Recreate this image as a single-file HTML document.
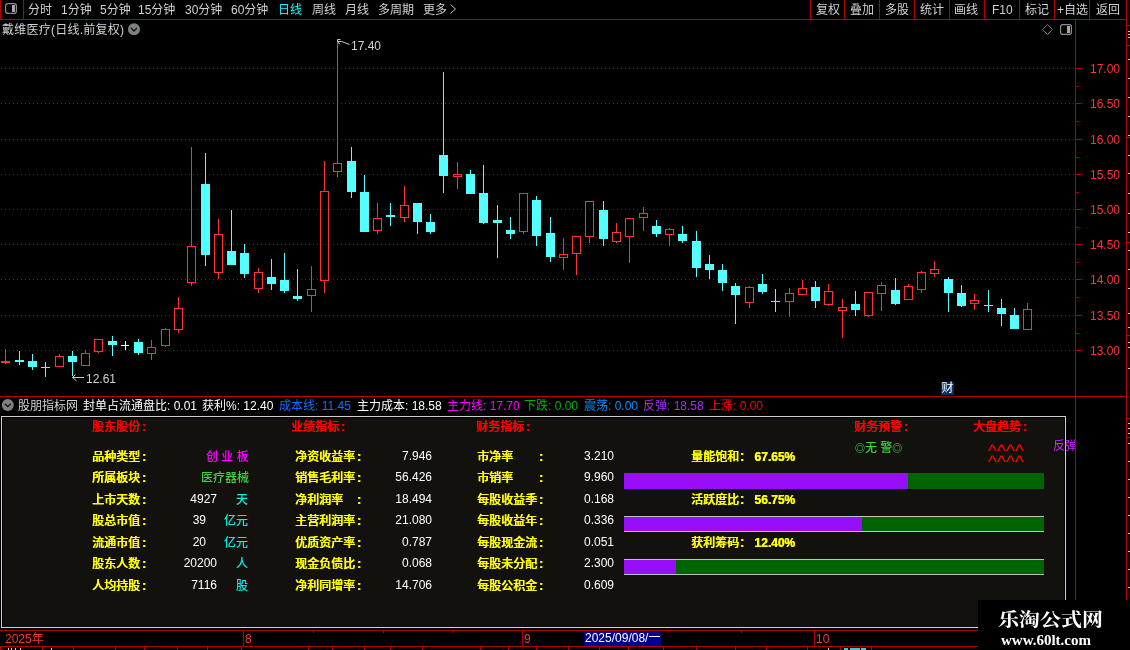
<!DOCTYPE html>
<html lang="zh-CN"><head><meta charset="utf-8"><title>戴维医疗 日线</title>
<style>
html,body{margin:0;padding:0;background:#000;}
body{width:1130px;height:650px;position:relative;overflow:hidden;font-family:"Liberation Sans","Noto Sans CJK SC",sans-serif;font-size:12px;color:#d2d2d2;}
#g{position:absolute;left:0;top:0;}
#tx{position:absolute;left:0;top:0;width:1130px;height:650px;will-change:transform;}
.t{position:absolute;white-space:nowrap;line-height:14px;height:14px;}
.b{font-weight:500;text-shadow:0.5px 0 0 currentColor;}
.y{color:#ffff00;}.r{color:#ff0000;}.w{color:#ffffff;}.c{color:#00f0f0;}.m,.m2{color:#ff00ff;}.gn{color:#40d040;}
.ax{color:#ff3232;}.cy{color:#00ffff;}.bl{color:#0a70ff;}.bl2{color:#0090ff;}.g2{color:#00b400;}.pu{color:#a82cf4;}
#tx .m,#tx .gn,#tx .c{font-weight:500;}
i{font-style:normal;margin-left:2px;font-weight:700;}
.n{color:#ffffff;text-align:right;}
</style></head><body>

<svg id="g" width="1130" height="650" viewBox="0 0 1130 650" shape-rendering="crispEdges">
<rect x="0" y="19" width="1127" height="1" fill="#b40000"/>
<rect x="0" y="0" width="1" height="20" fill="#b40000"/>
<rect x="23" y="0" width="1" height="20" fill="#b40000"/>
<rect x="810" y="0" width="1" height="19" fill="#b40000"/>
<rect x="844" y="0" width="1" height="19" fill="#b40000"/>
<rect x="879" y="0" width="1" height="19" fill="#b40000"/>
<rect x="914" y="0" width="1" height="19" fill="#b40000"/>
<rect x="949" y="0" width="1" height="19" fill="#b40000"/>
<rect x="984" y="0" width="1" height="19" fill="#b40000"/>
<rect x="1019" y="0" width="1" height="19" fill="#b40000"/>
<rect x="1054" y="0" width="1" height="19" fill="#b40000"/>
<rect x="1089" y="0" width="1" height="19" fill="#b40000"/>
<rect x="1126" y="0" width="1" height="600" fill="#b40000"/>
<rect x="1075" y="19" width="1" height="628" fill="#b40000"/>
<rect x="0" y="396" width="1127" height="1" fill="#b40000"/>
<rect x="0" y="630" width="978" height="1" fill="#b40000"/>
<rect x="0" y="646" width="978" height="1" fill="#b40000"/>
<line x1="1" y1="68.5" x2="1075" y2="68.5" stroke="#b40000" stroke-width="1" stroke-dasharray="1 3"/>
<rect x="1076" y="68" width="5" height="1" fill="#b40000"/>
<line x1="1" y1="103.5" x2="1075" y2="103.5" stroke="#b40000" stroke-width="1" stroke-dasharray="1 3"/>
<rect x="1076" y="103" width="5" height="1" fill="#b40000"/>
<line x1="1" y1="139.5" x2="1075" y2="139.5" stroke="#b40000" stroke-width="1" stroke-dasharray="1 3"/>
<rect x="1076" y="139" width="5" height="1" fill="#b40000"/>
<line x1="1" y1="174.5" x2="1075" y2="174.5" stroke="#b40000" stroke-width="1" stroke-dasharray="1 3"/>
<rect x="1076" y="174" width="5" height="1" fill="#b40000"/>
<line x1="1" y1="209.5" x2="1075" y2="209.5" stroke="#b40000" stroke-width="1" stroke-dasharray="1 3"/>
<rect x="1076" y="209" width="5" height="1" fill="#b40000"/>
<line x1="1" y1="244.5" x2="1075" y2="244.5" stroke="#b40000" stroke-width="1" stroke-dasharray="1 3"/>
<rect x="1076" y="244" width="5" height="1" fill="#b40000"/>
<line x1="1" y1="279.5" x2="1075" y2="279.5" stroke="#b40000" stroke-width="1" stroke-dasharray="1 3"/>
<rect x="1076" y="279" width="5" height="1" fill="#b40000"/>
<line x1="1" y1="315.5" x2="1075" y2="315.5" stroke="#b40000" stroke-width="1" stroke-dasharray="1 3"/>
<rect x="1076" y="315" width="5" height="1" fill="#b40000"/>
<line x1="1" y1="350.5" x2="1075" y2="350.5" stroke="#b40000" stroke-width="1" stroke-dasharray="1 3"/>
<rect x="1076" y="350" width="5" height="1" fill="#b40000"/>
<rect x="1076" y="86" width="3" height="1" fill="#b40000"/>
<rect x="1076" y="121" width="3" height="1" fill="#b40000"/>
<rect x="1076" y="157" width="3" height="1" fill="#b40000"/>
<rect x="1076" y="192" width="3" height="1" fill="#b40000"/>
<rect x="1076" y="227" width="3" height="1" fill="#b40000"/>
<rect x="1076" y="262" width="3" height="1" fill="#b40000"/>
<rect x="1076" y="297" width="3" height="1" fill="#b40000"/>
<rect x="1076" y="333" width="3" height="1" fill="#b40000"/>
<rect x="1" y="416" width="1065" height="212" fill="#d0d0d0"/>
<rect x="2" y="417" width="1063" height="210" fill="#000"/>
<rect x="3" y="418" width="1061" height="209" fill="#12110e"/>
<rect x="624" y="473" width="284" height="16" fill="#970ef9"/>
<rect x="908" y="473" width="136" height="16" fill="#006400"/>
<rect x="624" y="516" width="238" height="16" fill="#970ef9"/>
<rect x="862" y="516" width="182" height="16" fill="#006400"/>
<rect x="624" y="516" width="420" height="1" fill="#c0c0c0"/>
<rect x="624" y="531" width="420" height="1" fill="#c0c0c0"/>
<rect x="624" y="559" width="52" height="16" fill="#970ef9"/>
<rect x="676" y="559" width="368" height="16" fill="#006400"/>
<rect x="624" y="559" width="420" height="1" fill="#c0c0c0"/>
<rect x="624" y="574" width="420" height="1" fill="#c0c0c0"/>
<rect x="243" y="630" width="1" height="17" fill="#b40000"/>
<rect x="522" y="630" width="1" height="17" fill="#b40000"/>
<rect x="814" y="630" width="1" height="17" fill="#b40000"/>
<rect x="313" y="630" width="1" height="3" fill="#b40000"/>
<rect x="383" y="630" width="1" height="3" fill="#b40000"/>
<rect x="452" y="630" width="1" height="3" fill="#b40000"/>
<rect x="668" y="630" width="1" height="3" fill="#b40000"/>
<rect x="741" y="630" width="1" height="3" fill="#b40000"/>
<rect x="0" y="647" width="1" height="3" fill="#b40000"/>
<rect x="42" y="647" width="1" height="3" fill="#b40000"/>
<rect x="73" y="647" width="1" height="3" fill="#b40000"/>
<rect x="115" y="647" width="1" height="3" fill="#b40000"/>
<rect x="144" y="647" width="1" height="3" fill="#b40000"/>
<rect x="177" y="647" width="1" height="3" fill="#b40000"/>
<rect x="207" y="647" width="1" height="3" fill="#b40000"/>
<rect x="241" y="647" width="1" height="3" fill="#b40000"/>
<rect x="308" y="647" width="1" height="3" fill="#b40000"/>
<rect x="332" y="647" width="1" height="3" fill="#b40000"/>
<rect x="364" y="647" width="1" height="3" fill="#b40000"/>
<rect x="390" y="647" width="1" height="3" fill="#b40000"/>
<rect x="422" y="647" width="1" height="3" fill="#b40000"/>
<rect x="480" y="647" width="1" height="3" fill="#b40000"/>
<rect x="508" y="647" width="1" height="3" fill="#b40000"/>
<rect x="536" y="647" width="1" height="3" fill="#b40000"/>
<rect x="568" y="647" width="1" height="3" fill="#b40000"/>
<rect x="599" y="647" width="1" height="3" fill="#b40000"/>
<rect x="628" y="647" width="1" height="3" fill="#b40000"/>
<rect x="663" y="647" width="1" height="3" fill="#b40000"/>
<rect x="696" y="647" width="1" height="3" fill="#b40000"/>
<rect x="735" y="647" width="1" height="3" fill="#b40000"/>
<rect x="766" y="647" width="1" height="3" fill="#b40000"/>
<rect x="807" y="647" width="1" height="3" fill="#b40000"/>
<rect x="840" y="647" width="1" height="3" fill="#b40000"/>
<rect x="871" y="647" width="1" height="3" fill="#b40000"/>
<rect x="8" y="648" width="1" height="2" fill="#d0d0d0"/>
<rect x="11" y="648" width="1" height="2" fill="#d0d0d0"/>
<rect x="15" y="648" width="1" height="2" fill="#d0d0d0"/>
<rect x="20" y="648" width="1" height="2" fill="#d0d0d0"/>
<rect x="51" y="648" width="1" height="2" fill="#d0d0d0"/>
<rect x="828" y="648" width="1" height="2" fill="#d0d0d0"/>
<rect x="844" y="648" width="4" height="2" fill="#30d0d0"/>
<rect x="850" y="648" width="10" height="2" fill="#30d0d0"/>
<rect x="861" y="648" width="5" height="2" fill="#30d0d0"/>
<rect x="1127" y="25" width="3" height="1" fill="#b40000"/>
<rect x="1127" y="45" width="3" height="1" fill="#b40000"/>
<rect x="1127" y="137" width="3" height="1" fill="#b40000"/>
<rect x="1127" y="242" width="3" height="1" fill="#b40000"/>
<rect x="1127" y="335" width="3" height="1" fill="#b40000"/>
<rect x="1127" y="418" width="3" height="1" fill="#b40000"/>
<rect x="1127" y="437" width="3" height="1" fill="#b40000"/>
<rect x="1128" y="31" width="2" height="1" fill="#c0c0c0"/>
<rect x="1128" y="34" width="2" height="1" fill="#c0c0c0"/>
<rect x="1128" y="37" width="2" height="1" fill="#c0c0c0"/>
<rect x="1128" y="59" width="2" height="1" fill="#c0c0c0"/>
<rect x="1128" y="78" width="2" height="1" fill="#c0c0c0"/>
<rect x="1128" y="97" width="2" height="1" fill="#c0c0c0"/>
<rect x="1128" y="116" width="2" height="1" fill="#c0c0c0"/>
<rect x="1128" y="135" width="2" height="1" fill="#c0c0c0"/>
<rect x="1128" y="155" width="2" height="1" fill="#c0c0c0"/>
<rect x="1128" y="173" width="2" height="1" fill="#c0c0c0"/>
<rect x="1128" y="193" width="2" height="1" fill="#c0c0c0"/>
<rect x="1128" y="213" width="2" height="1" fill="#c0c0c0"/>
<rect x="1128" y="232" width="2" height="1" fill="#c0c0c0"/>
<rect x="1128" y="250" width="2" height="1" fill="#c0c0c0"/>
<rect x="1128" y="269" width="2" height="1" fill="#c0c0c0"/>
<rect x="1128" y="288" width="2" height="1" fill="#c0c0c0"/>
<rect x="1128" y="313" width="2" height="1" fill="#c0c0c0"/>
<rect x="1128" y="327" width="2" height="1" fill="#c0c0c0"/>
<rect x="1128" y="342" width="2" height="1" fill="#c0c0c0"/>
<rect x="1128" y="347" width="2" height="1" fill="#c0c0c0"/>
<rect x="1128" y="368" width="2" height="1" fill="#c0c0c0"/>
<rect x="1128" y="423" width="2" height="1" fill="#c0c0c0"/>
<rect x="1128" y="428" width="2" height="1" fill="#c0c0c0"/>
<rect x="1128" y="433" width="2" height="1" fill="#c0c0c0"/>
<rect x="1128" y="443" width="2" height="1" fill="#c0c0c0"/>
<rect x="1128" y="461" width="2" height="1" fill="#c0c0c0"/>
<rect x="1128" y="479" width="2" height="1" fill="#c0c0c0"/>
<rect x="1128" y="497" width="2" height="1" fill="#c0c0c0"/>
<rect x="1128" y="515" width="2" height="1" fill="#c0c0c0"/>
<rect x="1128" y="533" width="2" height="1" fill="#c0c0c0"/>
<rect x="1128" y="551" width="2" height="1" fill="#c0c0c0"/>
<rect x="1128" y="569" width="2" height="1" fill="#c0c0c0"/>
<rect x="1128" y="587" width="2" height="1" fill="#c0c0c0"/>
<rect x="5" y="349" width="1" height="12" fill="#ff3232"/>
<rect x="5" y="363" width="1" height="1" fill="#ff3232"/>
<rect x="1.5" y="361.5" width="8" height="1" fill="none" stroke="#ff3232" stroke-width="1"/>
<rect x="19" y="351" width="1" height="14" fill="#54ffff"/>
<rect x="15" y="360" width="9" height="2" fill="#54ffff"/>
<rect x="32" y="354" width="1" height="16" fill="#54ffff"/>
<rect x="28" y="361" width="9" height="6" fill="#54ffff"/>
<rect x="45" y="362" width="1" height="15" fill="#54ffff"/>
<rect x="41" y="367" width="9" height="1" fill="#54ffff"/>
<rect x="59" y="354" width="1" height="2" fill="#ff3232"/>
<rect x="55.5" y="356.5" width="8" height="10" fill="none" stroke="#ff3232" stroke-width="1"/>
<rect x="72" y="351" width="1" height="25" fill="#54ffff"/>
<rect x="68" y="356" width="9" height="6" fill="#54ffff"/>
<rect x="85" y="350" width="1" height="3" fill="#ff3232"/>
<rect x="81.5" y="353.5" width="8" height="12" fill="none" stroke="#ff3232" stroke-width="1"/>
<rect x="98" y="352" width="1" height="1" fill="#ff3232"/>
<rect x="94.5" y="339.5" width="8" height="12" fill="none" stroke="#ff3232" stroke-width="1"/>
<rect x="112" y="336" width="1" height="20" fill="#54ffff"/>
<rect x="108" y="341" width="9" height="4" fill="#54ffff"/>
<rect x="125" y="341" width="1" height="9" fill="#ffffff"/>
<rect x="121" y="345" width="8" height="1" fill="#ffffff"/>
<rect x="138" y="339" width="1" height="16" fill="#54ffff"/>
<rect x="134" y="342" width="9" height="11" fill="#54ffff"/>
<rect x="151" y="340" width="1" height="7" fill="#ff3232"/>
<rect x="151" y="354" width="1" height="6" fill="#ff3232"/>
<rect x="147.5" y="347.5" width="8" height="6" fill="none" stroke="#ff3232" stroke-width="1"/>
<rect x="165" y="328" width="1" height="1" fill="#ff3232"/>
<rect x="165" y="346" width="1" height="1" fill="#ff3232"/>
<rect x="161.5" y="329.5" width="8" height="16" fill="none" stroke="#ff3232" stroke-width="1"/>
<rect x="178" y="297" width="1" height="11" fill="#ff3232"/>
<rect x="178" y="330" width="1" height="3" fill="#ff3232"/>
<rect x="174.5" y="308.5" width="8" height="21" fill="none" stroke="#ff3232" stroke-width="1"/>
<rect x="191" y="147" width="1" height="99" fill="#ff3232"/>
<rect x="191" y="283" width="1" height="3" fill="#ff3232"/>
<rect x="187.5" y="246.5" width="8" height="36" fill="none" stroke="#ff3232" stroke-width="1"/>
<rect x="205" y="153" width="1" height="113" fill="#54ffff"/>
<rect x="201" y="184" width="9" height="71" fill="#54ffff"/>
<rect x="218" y="219" width="1" height="15" fill="#ff3232"/>
<rect x="218" y="273" width="1" height="6" fill="#ff3232"/>
<rect x="214.5" y="234.5" width="8" height="38" fill="none" stroke="#ff3232" stroke-width="1"/>
<rect x="231" y="210" width="1" height="55" fill="#54ffff"/>
<rect x="227" y="251" width="9" height="14" fill="#54ffff"/>
<rect x="244" y="244" width="1" height="34" fill="#54ffff"/>
<rect x="240" y="253" width="9" height="21" fill="#54ffff"/>
<rect x="258" y="268" width="1" height="4" fill="#ff3232"/>
<rect x="258" y="289" width="1" height="4" fill="#ff3232"/>
<rect x="254.5" y="272.5" width="8" height="16" fill="none" stroke="#ff3232" stroke-width="1"/>
<rect x="271" y="259" width="1" height="31" fill="#54ffff"/>
<rect x="267" y="277" width="9" height="7" fill="#54ffff"/>
<rect x="284" y="253" width="1" height="40" fill="#54ffff"/>
<rect x="280" y="280" width="9" height="11" fill="#54ffff"/>
<rect x="297" y="269" width="1" height="32" fill="#54ffff"/>
<rect x="293" y="296" width="9" height="3" fill="#54ffff"/>
<rect x="311" y="266" width="1" height="23" fill="#ff3232"/>
<rect x="311" y="296" width="1" height="16" fill="#ff3232"/>
<rect x="307.5" y="289.5" width="8" height="6" fill="none" stroke="#ff3232" stroke-width="1"/>
<rect x="324" y="161" width="1" height="30" fill="#ff3232"/>
<rect x="324" y="281" width="1" height="12" fill="#ff3232"/>
<rect x="320.5" y="191.5" width="8" height="89" fill="none" stroke="#ff3232" stroke-width="1"/>
<rect x="337" y="43" width="1" height="120" fill="#ff3232"/>
<rect x="337" y="172" width="1" height="5" fill="#ff3232"/>
<rect x="333.5" y="163.5" width="8" height="8" fill="none" stroke="#ff3232" stroke-width="1"/>
<rect x="351" y="147" width="1" height="51" fill="#54ffff"/>
<rect x="347" y="161" width="9" height="31" fill="#54ffff"/>
<rect x="364" y="175" width="1" height="57" fill="#54ffff"/>
<rect x="360" y="192" width="9" height="40" fill="#54ffff"/>
<rect x="377" y="203" width="1" height="15" fill="#ff3232"/>
<rect x="377" y="231" width="1" height="3" fill="#ff3232"/>
<rect x="373.5" y="218.5" width="8" height="12" fill="none" stroke="#ff3232" stroke-width="1"/>
<rect x="390" y="203" width="1" height="23" fill="#54ffff"/>
<rect x="386" y="215" width="9" height="2" fill="#54ffff"/>
<rect x="404" y="186" width="1" height="19" fill="#ff3232"/>
<rect x="404" y="218" width="1" height="4" fill="#ff3232"/>
<rect x="400.5" y="205.5" width="8" height="12" fill="none" stroke="#ff3232" stroke-width="1"/>
<rect x="417" y="203" width="1" height="31" fill="#54ffff"/>
<rect x="413" y="203" width="9" height="19" fill="#54ffff"/>
<rect x="430" y="214" width="1" height="20" fill="#54ffff"/>
<rect x="426" y="222" width="9" height="10" fill="#54ffff"/>
<rect x="443" y="72" width="1" height="121" fill="#54ffff"/>
<rect x="439" y="155" width="9" height="21" fill="#54ffff"/>
<rect x="457" y="162" width="1" height="12" fill="#ff3232"/>
<rect x="457" y="177" width="1" height="12" fill="#ff3232"/>
<rect x="453.5" y="174.5" width="8" height="2" fill="none" stroke="#ff3232" stroke-width="1"/>
<rect x="470" y="170" width="1" height="24" fill="#54ffff"/>
<rect x="466" y="174" width="9" height="20" fill="#54ffff"/>
<rect x="483" y="165" width="1" height="59" fill="#54ffff"/>
<rect x="479" y="193" width="9" height="30" fill="#54ffff"/>
<rect x="497" y="205" width="1" height="53" fill="#54ffff"/>
<rect x="493" y="220" width="9" height="3" fill="#54ffff"/>
<rect x="510" y="217" width="1" height="22" fill="#54ffff"/>
<rect x="506" y="230" width="9" height="4" fill="#54ffff"/>
<rect x="523" y="232" width="1" height="2" fill="#ff3232"/>
<rect x="519.5" y="193.5" width="8" height="38" fill="none" stroke="#ff3232" stroke-width="1"/>
<rect x="536" y="196" width="1" height="50" fill="#54ffff"/>
<rect x="532" y="200" width="9" height="36" fill="#54ffff"/>
<rect x="550" y="217" width="1" height="45" fill="#54ffff"/>
<rect x="546" y="233" width="9" height="24" fill="#54ffff"/>
<rect x="563" y="238" width="1" height="16" fill="#ff3232"/>
<rect x="563" y="258" width="1" height="12" fill="#ff3232"/>
<rect x="559.5" y="254.5" width="8" height="3" fill="none" stroke="#ff3232" stroke-width="1"/>
<rect x="576" y="254" width="1" height="21" fill="#ff3232"/>
<rect x="572.5" y="236.5" width="8" height="17" fill="none" stroke="#ff3232" stroke-width="1"/>
<rect x="589" y="237" width="1" height="6" fill="#ff3232"/>
<rect x="585.5" y="201.5" width="8" height="35" fill="none" stroke="#ff3232" stroke-width="1"/>
<rect x="603" y="201" width="1" height="45" fill="#54ffff"/>
<rect x="599" y="210" width="9" height="29" fill="#54ffff"/>
<rect x="616" y="223" width="1" height="9" fill="#ff3232"/>
<rect x="616" y="242" width="1" height="1" fill="#ff3232"/>
<rect x="612.5" y="232.5" width="8" height="9" fill="none" stroke="#ff3232" stroke-width="1"/>
<rect x="629" y="237" width="1" height="26" fill="#ff3232"/>
<rect x="625.5" y="218.5" width="8" height="18" fill="none" stroke="#ff3232" stroke-width="1"/>
<rect x="643" y="207" width="1" height="6" fill="#ff3232"/>
<rect x="643" y="218" width="1" height="13" fill="#ff3232"/>
<rect x="639.5" y="213.5" width="8" height="4" fill="none" stroke="#ff3232" stroke-width="1"/>
<rect x="656" y="220" width="1" height="17" fill="#54ffff"/>
<rect x="652" y="226" width="9" height="8" fill="#54ffff"/>
<rect x="669" y="228" width="1" height="1" fill="#ff3232"/>
<rect x="669" y="235" width="1" height="11" fill="#ff3232"/>
<rect x="665.5" y="229.5" width="8" height="5" fill="none" stroke="#ff3232" stroke-width="1"/>
<rect x="682" y="226" width="1" height="17" fill="#54ffff"/>
<rect x="678" y="234" width="9" height="7" fill="#54ffff"/>
<rect x="696" y="231" width="1" height="46" fill="#54ffff"/>
<rect x="692" y="241" width="9" height="27" fill="#54ffff"/>
<rect x="709" y="255" width="1" height="24" fill="#54ffff"/>
<rect x="705" y="264" width="9" height="6" fill="#54ffff"/>
<rect x="722" y="264" width="1" height="27" fill="#54ffff"/>
<rect x="718" y="270" width="9" height="13" fill="#54ffff"/>
<rect x="735" y="283" width="1" height="41" fill="#54ffff"/>
<rect x="731" y="286" width="9" height="9" fill="#54ffff"/>
<rect x="749" y="286" width="1" height="1" fill="#ff3232"/>
<rect x="749" y="303" width="1" height="5" fill="#ff3232"/>
<rect x="745.5" y="287.5" width="8" height="15" fill="none" stroke="#ff3232" stroke-width="1"/>
<rect x="762" y="274" width="1" height="20" fill="#54ffff"/>
<rect x="758" y="284" width="9" height="8" fill="#54ffff"/>
<rect x="775" y="289" width="1" height="23" fill="#54ffff"/>
<rect x="771" y="301" width="9" height="1" fill="#54ffff"/>
<rect x="789" y="288" width="1" height="5" fill="#ff3232"/>
<rect x="789" y="302" width="1" height="15" fill="#ff3232"/>
<rect x="785.5" y="293.5" width="8" height="8" fill="none" stroke="#ff3232" stroke-width="1"/>
<rect x="802" y="280" width="1" height="8" fill="#ff3232"/>
<rect x="798.5" y="288.5" width="8" height="6" fill="none" stroke="#ff3232" stroke-width="1"/>
<rect x="815" y="281" width="1" height="27" fill="#54ffff"/>
<rect x="811" y="287" width="9" height="14" fill="#54ffff"/>
<rect x="828" y="284" width="1" height="7" fill="#ff3232"/>
<rect x="828" y="305" width="1" height="1" fill="#ff3232"/>
<rect x="824.5" y="291.5" width="8" height="13" fill="none" stroke="#ff3232" stroke-width="1"/>
<rect x="842" y="299" width="1" height="8" fill="#ff3232"/>
<rect x="842" y="311" width="1" height="27" fill="#ff3232"/>
<rect x="838.5" y="307.5" width="8" height="3" fill="none" stroke="#ff3232" stroke-width="1"/>
<rect x="855" y="291" width="1" height="25" fill="#54ffff"/>
<rect x="851" y="304" width="9" height="6" fill="#54ffff"/>
<rect x="868" y="316" width="1" height="1" fill="#ff3232"/>
<rect x="864.5" y="292.5" width="8" height="23" fill="none" stroke="#ff3232" stroke-width="1"/>
<rect x="881" y="282" width="1" height="3" fill="#ff3232"/>
<rect x="881" y="294" width="1" height="17" fill="#ff3232"/>
<rect x="877.5" y="285.5" width="8" height="8" fill="none" stroke="#ff3232" stroke-width="1"/>
<rect x="895" y="278" width="1" height="27" fill="#54ffff"/>
<rect x="891" y="290" width="9" height="14" fill="#54ffff"/>
<rect x="908" y="284" width="1" height="2" fill="#ff3232"/>
<rect x="904.5" y="286.5" width="8" height="13" fill="none" stroke="#ff3232" stroke-width="1"/>
<rect x="921" y="271" width="1" height="1" fill="#ff3232"/>
<rect x="921" y="290" width="1" height="3" fill="#ff3232"/>
<rect x="917.5" y="272.5" width="8" height="17" fill="none" stroke="#ff3232" stroke-width="1"/>
<rect x="934" y="261" width="1" height="8" fill="#ff3232"/>
<rect x="934" y="274" width="1" height="3" fill="#ff3232"/>
<rect x="930.5" y="269.5" width="8" height="4" fill="none" stroke="#ff3232" stroke-width="1"/>
<rect x="948" y="277" width="1" height="35" fill="#54ffff"/>
<rect x="944" y="279" width="9" height="14" fill="#54ffff"/>
<rect x="961" y="285" width="1" height="22" fill="#54ffff"/>
<rect x="957" y="293" width="9" height="13" fill="#54ffff"/>
<rect x="974" y="294" width="1" height="6" fill="#ff3232"/>
<rect x="974" y="304" width="1" height="6" fill="#ff3232"/>
<rect x="970.5" y="300.5" width="8" height="3" fill="none" stroke="#ff3232" stroke-width="1"/>
<rect x="988" y="290" width="1" height="22" fill="#54ffff"/>
<rect x="984" y="305" width="9" height="1" fill="#54ffff"/>
<rect x="1001" y="299" width="1" height="27" fill="#54ffff"/>
<rect x="997" y="308" width="9" height="6" fill="#54ffff"/>
<rect x="1014" y="308" width="1" height="21" fill="#54ffff"/>
<rect x="1010" y="315" width="9" height="14" fill="#54ffff"/>
<rect x="1027" y="303" width="1" height="6" fill="#ff3232"/>
<rect x="1023.5" y="309.5" width="8" height="20" fill="none" stroke="#ff3232" stroke-width="1"/>
<g shape-rendering="auto">
<rect x="5.6" y="3.6" width="10.8" height="9.8" rx="2.2" fill="none" stroke="#8c8c8c" stroke-width="1.2"/><rect x="12" y="5" width="3" height="7" fill="#a8a8a8"/>
<rect x="1060.6" y="24.6" width="10.8" height="9.8" rx="2.2" fill="none" stroke="#8c8c8c" stroke-width="1.2"/><rect x="1067" y="26" width="3" height="7" fill="#a8a8a8"/>
<path d="M1047.5 24.5 L1052.5 29.5 L1047.5 34.5 L1042.5 29.5 Z" fill="none" stroke="#787878" stroke-width="1"/>
<circle cx="134" cy="29.3" r="6" fill="#808080"/><path d="M131 28 L134 31 L137 28" fill="none" stroke="#101010" stroke-width="1.3"/>
<circle cx="7.8" cy="405" r="6" fill="#808080"/><path d="M4.8 403.7 L7.8 406.7 L10.8 403.7" fill="none" stroke="#101010" stroke-width="1.3"/>
<path d="M450.5 4.5 L455.5 9 L450.5 13.5" fill="none" stroke="#c0c0c0" stroke-width="1"/>
<path d="M337.5 41.5 L341.5 41.5 L349.5 44.5 M337.5 42.5 L337.5 39.5 L340.5 39.5 M338 42 L340 44.5" fill="none" stroke="#c8c8c8" stroke-width="1"/>
<path d="M72 377.5 L84 377.5 M72.5 377.5 L75.5 374.5 M72.5 377.5 L76.5 380.8" fill="none" stroke="#c8c8c8" stroke-width="1"/>
</g>
</svg>
<div id="tx">
<div class="t " style="left:28px;top:3px;">分时</div>
<div class="t " style="left:61px;top:3px;">1分钟</div>
<div class="t " style="left:100px;top:3px;">5分钟</div>
<div class="t " style="left:138px;top:3px;">15分钟</div>
<div class="t " style="left:185px;top:3px;">30分钟</div>
<div class="t " style="left:231px;top:3px;">60分钟</div>
<div class="t cy" style="left:278px;top:3px;">日线</div>
<div class="t " style="left:312px;top:3px;">周线</div>
<div class="t " style="left:345px;top:3px;">月线</div>
<div class="t " style="left:378px;top:3px;">多周期</div>
<div class="t " style="left:423px;top:3px;">更多</div>
<div class="t " style="left:816px;top:3px;">复权</div>
<div class="t " style="left:850px;top:3px;">叠加</div>
<div class="t " style="left:885px;top:3px;">多股</div>
<div class="t " style="left:920px;top:3px;">统计</div>
<div class="t " style="left:954px;top:3px;">画线</div>
<div class="t " style="left:992px;top:3px;">F10</div>
<div class="t " style="left:1025px;top:3px;">标记</div>
<div class="t " style="left:1057px;top:3px;">+自选</div>
<div class="t " style="left:1096px;top:3px;">返回</div>
<div class="t " style="left:2px;top:23px;letter-spacing:0.25px">戴维医疗(日线.前复权)</div>
<div class="t ax" style="left:1090px;top:62px;">17.00</div>
<div class="t ax" style="left:1090px;top:97px;">16.50</div>
<div class="t ax" style="left:1090px;top:133px;">16.00</div>
<div class="t ax" style="left:1090px;top:168px;">15.50</div>
<div class="t ax" style="left:1090px;top:203px;">15.00</div>
<div class="t ax" style="left:1090px;top:238px;">14.50</div>
<div class="t ax" style="left:1090px;top:273px;">14.00</div>
<div class="t ax" style="left:1090px;top:309px;">13.50</div>
<div class="t ax" style="left:1090px;top:344px;">13.00</div>
<div class="t " style="left:351px;top:39px;">17.40</div>
<div class="t " style="left:86px;top:372px;">12.61</div>
<div class="t w" style="left:941px;top:382px;width:13px;height:13px;line-height:13px;background:#003272;text-align:center">财</div>
<div class="t " style="left:18px;top:399px;">股朋指标网</div>
<div class="t w" style="left:83px;top:399px;">封单占流通盘比: 0.01</div>
<div class="t w" style="left:202px;top:399px;">获利%: 12.40</div>
<div class="t bl" style="left:279px;top:399px;">成本线: 11.45</div>
<div class="t w" style="left:357px;top:399px;">主力成本: 18.58</div>
<div class="t m2" style="left:447px;top:399px;">主力线: 17.70</div>
<div class="t g2" style="left:524px;top:399px;">下跌: 0.00</div>
<div class="t bl2" style="left:584px;top:399px;">震荡: 0.00</div>
<div class="t pu" style="left:643px;top:399px;">反弹: 18.58</div>
<div class="t r" style="left:709px;top:399px;">上涨: 0.00</div>
<div class="t r b" style="left:92px;top:420px;">股东股份<i>:</i></div>
<div class="t r b" style="left:291px;top:420px;">业绩指标<i>:</i></div>
<div class="t r b" style="left:476px;top:420px;">财务指标<i>:</i></div>
<div class="t r b" style="left:854px;top:420px;">财务预警<i>:</i></div>
<div class="t r b" style="left:973px;top:420px;">大盘趋势<i>:</i></div>
<div class="t y b" style="left:92px;top:450px;">品种类型<i>:</i></div>
<div class="t y b" style="left:92px;top:471px;">所属板块<i>:</i></div>
<div class="t y b" style="left:92px;top:493px;">上市天数<i>:</i></div>
<div class="t y b" style="left:92px;top:514px;">股总市值<i>:</i></div>
<div class="t y b" style="left:92px;top:536px;">流通市值<i>:</i></div>
<div class="t y b" style="left:92px;top:557px;">股东人数<i>:</i></div>
<div class="t y b" style="left:92px;top:579px;">人均持股<i>:</i></div>
<div class="t y b" style="left:295px;top:450px;">净资收益率<i>:</i></div>
<div class="t y b" style="left:295px;top:471px;">销售毛利率<i>:</i></div>
<div class="t y b" style="left:295px;top:493px;">净利润率</div>
<div class="t y b" style="left:355px;top:493px;"><i>:</i></div>
<div class="t y b" style="left:295px;top:514px;">主营利润率<i>:</i></div>
<div class="t y b" style="left:295px;top:536px;">优质资产率<i>:</i></div>
<div class="t y b" style="left:295px;top:557px;">现金负债比<i>:</i></div>
<div class="t y b" style="left:295px;top:579px;">净利同增率<i>:</i></div>
<div class="t y b" style="left:477px;top:450px;">市净率</div>
<div class="t y b" style="left:537px;top:450px;"><i>:</i></div>
<div class="t y b" style="left:477px;top:471px;">市销率</div>
<div class="t y b" style="left:537px;top:471px;"><i>:</i></div>
<div class="t y b" style="left:477px;top:493px;">每股收益季<i>:</i></div>
<div class="t y b" style="left:477px;top:514px;">每股收益年<i>:</i></div>
<div class="t y b" style="left:477px;top:536px;">每股现金流<i>:</i></div>
<div class="t y b" style="left:477px;top:557px;">每股未分配<i>:</i></div>
<div class="t y b" style="left:477px;top:579px;">每股公积金<i>:</i></div>
<div class="t w" style="right:698px;top:449px;">7.946</div>
<div class="t w" style="right:698px;top:470px;">56.426</div>
<div class="t w" style="right:698px;top:492px;">18.494</div>
<div class="t w" style="right:698px;top:513px;">21.080</div>
<div class="t w" style="right:698px;top:535px;">0.787</div>
<div class="t w" style="right:698px;top:556px;">0.068</div>
<div class="t w" style="right:698px;top:578px;">14.706</div>
<div class="t w" style="right:516px;top:449px;">3.210</div>
<div class="t w" style="right:516px;top:470px;">9.960</div>
<div class="t w" style="right:516px;top:492px;">0.168</div>
<div class="t w" style="right:516px;top:513px;">0.336</div>
<div class="t w" style="right:516px;top:535px;">0.051</div>
<div class="t w" style="right:516px;top:556px;">2.300</div>
<div class="t w" style="right:516px;top:578px;">0.609</div>
<div class="t m" style="left:206px;top:450px;">创 业 板</div>
<div class="t gn" style="left:201px;top:471px;">医疗器械</div>
<div class="t w" style="right:913px;top:492px;">4927</div>
<div class="t c" style="left:236px;top:493px;">天</div>
<div class="t w" style="right:924px;top:513px;">39</div>
<div class="t c" style="left:224px;top:514px;">亿元</div>
<div class="t w" style="right:924px;top:535px;">20</div>
<div class="t c" style="left:224px;top:536px;">亿元</div>
<div class="t w" style="right:913px;top:556px;">20200</div>
<div class="t c" style="left:236px;top:557px;">人</div>
<div class="t w" style="right:913px;top:578px;">7116</div>
<div class="t c" style="left:236px;top:579px;">股</div>
<div class="t y b" style="left:691px;top:450px;">量能饱和： <b>67.65%</b></div>
<div class="t y b" style="left:691px;top:493px;">活跃度比： <b>56.75%</b></div>
<div class="t y b" style="left:691px;top:536px;">获利筹码： <b>12.40%</b></div>
<div class="t gn" style="left:855px;top:441px;"><span style="font-size:10px;font-weight:900">◎</span>无 警<span style="font-size:10px;font-weight:900">◎</span></div>
<div class="t r" style="left:988px;top:443px;font-size:19px;letter-spacing:0.1px;line-height:16px;height:16px">^^^^</div>
<div class="t r" style="left:988px;top:454px;font-size:19px;letter-spacing:0.1px;line-height:16px;height:16px">^^^^</div>
<div class="t" style="left:1053px;top:439px;width:22px;overflow:hidden;color:#c828ff">反弹</div>
<div class="t ax" style="left:5px;top:632px;">2025年</div>
<div class="t ax" style="left:245px;top:632px;">8</div>
<div class="t ax" style="left:524px;top:632px;">9</div>
<div class="t ax" style="left:816px;top:632px;">10</div>
<div class="t w" style="left:584px;top:631px;width:77px;height:15px;line-height:15px;background:#000090;text-indent:1px">2025/09/08/一</div>
<div style="position:absolute;left:978px;top:600px;width:152px;height:50px;background:#000"></div>
<div class="t w" style="left:998px;top:608px;font:bold 21px/24px 'Liberation Serif','Noto Serif CJK SC',serif;height:24px;transform:scaleY(0.87);transform-origin:0 50%">乐淘公式网</div>
<div class="t w" style="left:1001px;top:628px;font:bold 15px/24px 'Liberation Serif',serif;height:24px">www.60lt.com</div>
</div>
</body></html>
